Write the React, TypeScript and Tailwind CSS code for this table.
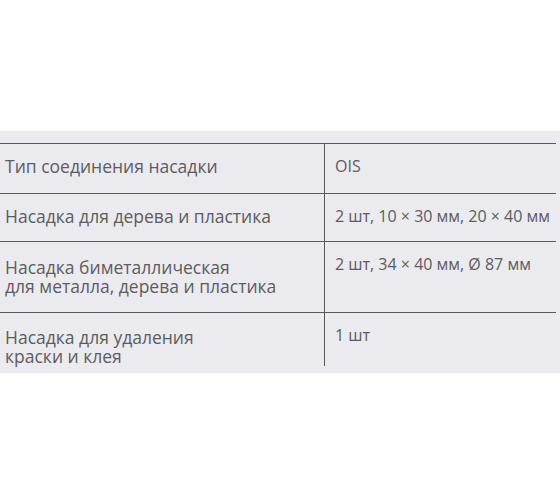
const rows = [
  { name: ["Тип соединения насадки"], value: "OIS", h: "h-[50px]", pl: "pt-[13px]", pr: "pt-[13px]" },
  { name: ["Насадка для дерева и пластика"], value: "2 шт, 10 × 30 мм, 20 × 40 мм", h: "h-[48px]", pl: "pt-[13px]", pr: "pt-[13px]" },
  {
    name: ["Насадка биметаллическая", "для металла, дерева и пластика"],
    value: "2 шт, 34 × 40 мм, Ø 87 мм",
    h: "h-[71px]",
    pl: "pt-[16px]",
    pr: "pt-[13px]",
  },
  {
    name: ["Насадка для удаления", "краски и клея"],
    value: "1 шт",
    h: "h-[48px]",
    pl: "pt-[15px]",
    pr: "pt-[13px]",
  },
];

export default function App() {
  return (
    <div
      className="w-[560px] h-[504px] bg-white pt-[131px] overflow-hidden"
      style={{ fontFamily: '"Open Sans", "Liberation Sans", sans-serif' }}
    >
      <div className="h-[242px] bg-[#ebeaef] pt-[12px]">
        <div className="w-[556px] border-t border-[#58585c] leading-[19px] text-[#5c5c5e]">
          {rows.map((r, i) => (
            <div
              key={i}
              className={`grid grid-cols-[325px_1fr] ${r.h} ${
                i < rows.length - 1 ? "border-b border-[#58585c]" : ""
              }`}
            >
              <div className={`border-r border-[#58585c] pl-[5px] text-[17.5px] ${r.pl}`}>
                {r.name.map((l, j) => (
                  <div key={j} className="whitespace-nowrap">
                    {l}
                  </div>
                ))}
              </div>
              <div className={`pl-[10px] whitespace-nowrap text-[16px] ${r.pr}`}>{r.value}</div>
            </div>
          ))}
        </div>
      </div>
    </div>
  );
}
